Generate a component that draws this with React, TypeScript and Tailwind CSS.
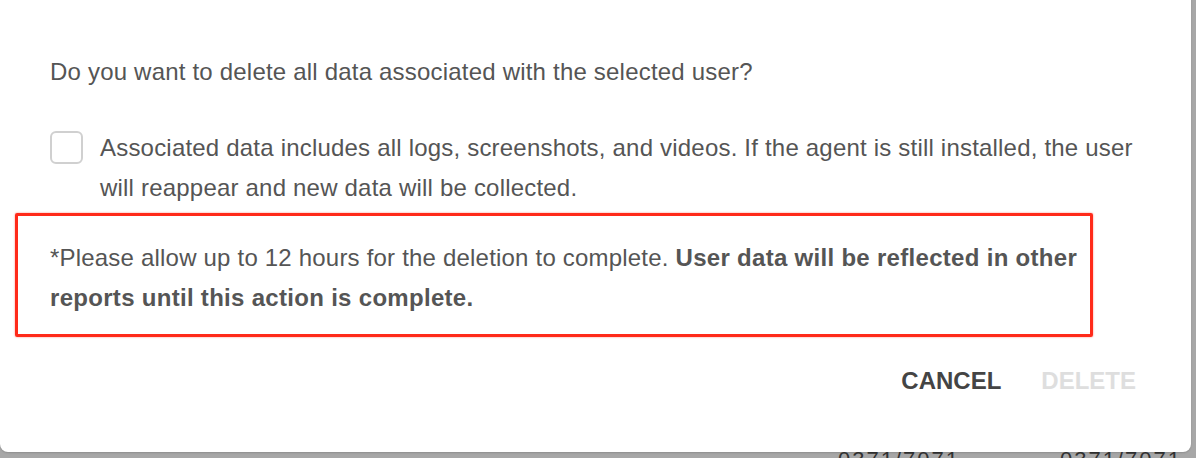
export default function App() {
  return (
    <div className="w-[1196px] h-[458px] bg-[#a7a7a7] overflow-hidden relative" style={{ fontFamily: '"Liberation Sans", Arial, sans-serif' }}>
      <div className="absolute left-[838px] top-[449px] text-[#333] text-[22px] leading-none tracking-[2px]">0371/7071</div>
      <div className="absolute left-[1060px] top-[449px] text-[#333] text-[22px] leading-none tracking-[2px]">0371/7071</div>
      <div className="relative w-[1191px] h-[462px] bg-white rounded-b-[8px] -mt-[10px] pt-[62px] shadow-[0_1px_2px_rgba(0,0,0,0.15)]">
        <div className="pl-[50px] pr-[50px]">
          <p className="text-[24px] leading-[40px] text-[#555] tracking-[0.2px]">Do you want to delete all data associated with the selected user?</p>
          <div className="flex mt-[36px]">
            <div className="w-[33px] h-[33px] shrink-0 mt-[3px] border-2 border-[#d0d0d0] rounded-[6px]" />
            <p className="ml-[17px] text-[24px] leading-[40px] text-[#555] tracking-[0.2px]">
              Associated data includes all logs, screenshots, and videos. If the agent is still installed, the user will reappear and new data will be collected.
            </p>
          </div>
          <div className="ml-[-35px] w-[1078px] mt-[5px] border-[3px] border-[#ff2a1a] rounded-[2px] pl-[32px] pr-[6px] pt-[22px] pb-[16px] shadow-[0_0_2px_rgba(255,42,26,0.6)]">
            <p className="text-[24px] leading-[40px] text-[#555] tracking-[0.2px]">
              *Please allow up to 12 hours for the deletion to complete. <span className="font-bold tracking-[0.3px]">User data will be reflected in other reports until this action is complete.</span>
            </p>
          </div>
          <div className="flex justify-end items-center mt-[26px] pr-[5px] gap-[40px]">
            <span className="text-[24px] font-bold text-[#444]">CANCEL</span>
            <span className="text-[24px] font-bold text-[#dedede]">DELETE</span>
          </div>
        </div>
      </div>
    </div>
  );
}
